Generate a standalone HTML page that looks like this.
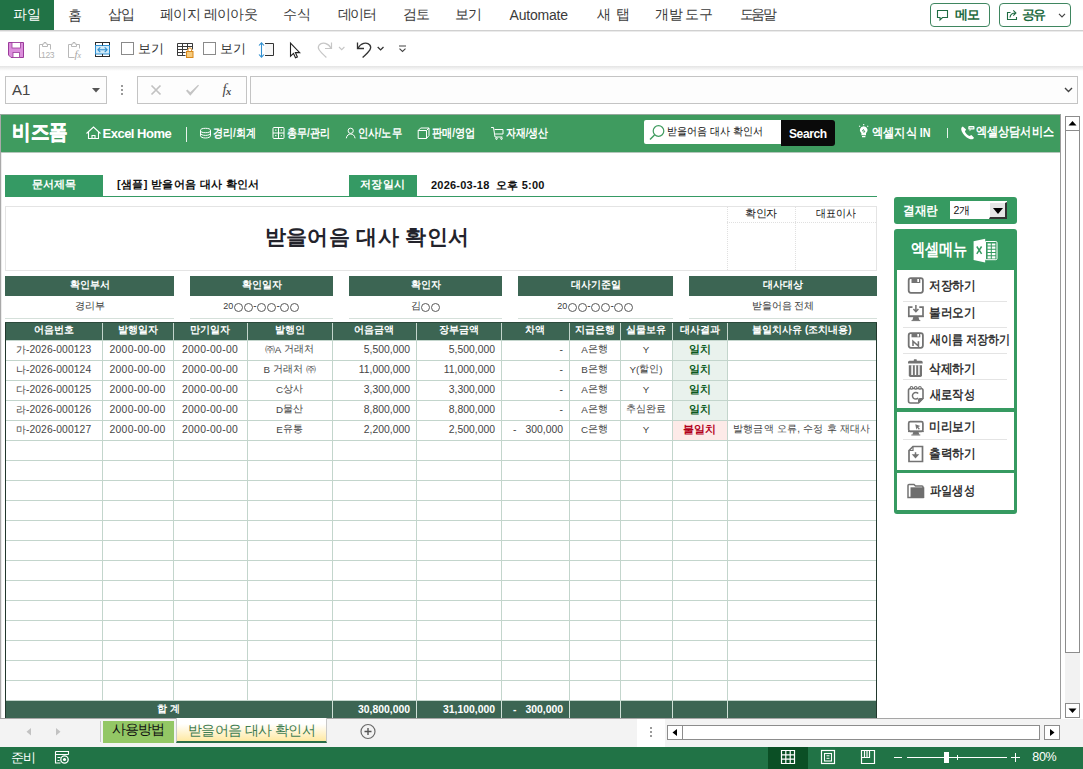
<!DOCTYPE html>
<html lang="ko">
<head>
<meta charset="utf-8">
<title>받을어음 대사 확인서</title>
<style>
*{box-sizing:border-box;margin:0;padding:0}
html,body{width:1083px;height:769px;overflow:hidden;background:#fff}
body{font-family:"Liberation Sans",sans-serif;font-size:12px;color:#222;position:relative}
.a{position:absolute}
.t{position:absolute;white-space:nowrap;line-height:1}
.c{text-align:center}
.r{text-align:right}
.b{font-weight:bold}
svg{position:absolute;overflow:visible}
.btn{border:1px solid #3f8660;border-radius:4px;height:24px;top:3px;background:#fff}
.box{background:#fdfdfd;border:1px solid #c4c4c4}
.dk{background:#3c6553;color:#fff;font-weight:bold;font-size:10px;text-align:center;line-height:18px;position:absolute;white-space:nowrap}
.v{position:absolute;font-size:10px;color:#3a3a3a;text-align:center;white-space:nowrap;line-height:19px}
.cell{position:absolute;font-size:10px;color:#454545;white-space:nowrap;line-height:18px;height:20px}
.l{font-size:9.8px;position:relative;top:0.6px}
.n{font-size:10.4px;line-height:20px}
.d{font-size:10.4px;letter-spacing:0.3px;line-height:20px}
.m{font-size:10.3px;line-height:19.5px;letter-spacing:0.1px}
.hl{position:absolute;height:1px;background:#c3d5cc}
.vl{position:absolute;width:1px;background:#c3d5cc}
.o{display:inline-block;width:9px;height:9px;border:1px solid #5a5a5a;border-radius:50%;margin:0 0.5px;vertical-align:-2.5px}
.ms{position:absolute;left:903px;width:104px;height:1px;background:#e4e4e4}
</style>
</head>
<body>
<div class="a" style="left:0;top:0;width:1083px;height:30px;background:#fff"></div>
<div class="a" style="left:0;top:0;width:54px;height:30px;background:#217346"></div>
<div class="t" style="left:13px;top:7px;font-size:14px;color:#fff;">파일</div>
<div class="t" style="left:67.5px;top:7.5px;font-size:14px;color:#3b3b3b;">홈</div>
<div class="t" style="left:108px;top:7px;font-size:14px;color:#3b3b3b;letter-spacing:-1px;">삽입</div>
<div class="t" style="left:160px;top:7px;font-size:14px;color:#3b3b3b;letter-spacing:-0.57px;">페이지 레이아웃</div>
<div class="t" style="left:282.5px;top:7px;font-size:14px;color:#3b3b3b;">수식</div>
<div class="t" style="left:337.5px;top:7px;font-size:14px;color:#3b3b3b;letter-spacing:-1.25px;">데이터</div>
<div class="t" style="left:402.5px;top:7px;font-size:14px;color:#3b3b3b;letter-spacing:-1px;">검토</div>
<div class="t" style="left:455px;top:7px;font-size:14px;color:#3b3b3b;letter-spacing:-1px;">보기</div>
<div class="t" style="left:509.5px;top:8px;font-size:14px;color:#3b3b3b;letter-spacing:-0.21px;">Automate</div>
<div class="t" style="left:597px;top:7px;font-size:14px;color:#3b3b3b;letter-spacing:0.5px;">새 탭</div>
<div class="t" style="left:655px;top:7px;font-size:14px;color:#3b3b3b;letter-spacing:-0.5px;">개발 도구</div>
<div class="t" style="left:739.5px;top:7px;font-size:14px;color:#3b3b3b;letter-spacing:-2.25px;">도움말</div>
<div class="a btn" style="left:930px;width:60px"></div>
<div class="a btn" style="left:999px;width:72px"></div>
<div class="t" style="left:955.4px;top:7.8px;font-size:13px;color:#1e6b41;font-weight:bold;letter-spacing:-1.4px;">메모</div>
<div class="t" style="left:1022px;top:7.8px;font-size:13px;color:#1e6b41;font-weight:bold;letter-spacing:-1.6px;">공유</div>
<div class="a" style="left:0;top:30px;width:1083px;height:1px;background:#d0d0d0"></div>
<div class="a" style="left:0;top:31px;width:1083px;height:1px;background:#ebebeb"></div>
<div class="a" style="left:0;top:32px;width:1083px;height:34px;background:#fff"></div>
<div class="a" style="left:0;top:66px;width:1083px;height:5px;background:linear-gradient(#e4e4e4,#fff)"></div>
<div class="a" style="left:121px;top:42px;width:13px;height:13px;border:1px solid #8a8a8a;background:#fff"></div>
<div class="a" style="left:203px;top:42px;width:13px;height:13px;border:1px solid #8a8a8a;background:#fff"></div>
<div class="t" style="left:138px;top:42.5px;font-size:12.5px;color:#333;">보기</div>
<div class="t" style="left:220px;top:42.5px;font-size:12.5px;color:#333;">보기</div>
<div class="a" style="left:0;top:71px;width:1083px;height:43px;background:#fff"></div>
<div class="a box" style="left:5px;top:76px;width:102px;height:28px"></div>
<div class="t" style="left:12px;top:82px;font-size:15px;color:#444;">A1</div>
<div class="a" style="left:121px;top:85px;width:2px;height:2px;background:#9a9a9a;box-shadow:0 4px 0 #9a9a9a,0 8px 0 #9a9a9a"></div>
<div class="a box" style="left:137px;top:76px;width:110px;height:28px"></div>
<div class="t" style="left:222.500px;top:82px;font-family:'Liberation Serif',serif;font-style:italic;font-size:14.500px;color:#4a4a4a">f<b style="font-size:10.500px;position:relative;left:-0.500px;top:0.500px">x</b></div>
<div class="a box" style="left:250px;top:76px;width:828px;height:28px"></div>
<div class="a" style="left:0;top:114px;width:1061px;height:604px;background:#fff"></div>
<div class="a" style="left:0;top:114px;width:1px;height:605px;background:#a9a9a9"></div>
<div class="a" style="left:1px;top:153px;width:1px;height:565px;background:#ececec"></div>
<div class="a" style="left:1060px;top:114px;width:1px;height:604px;background:#9b9b9b"></div>
<div class="a" style="left:0;top:114px;width:1061px;height:1px;background:#96a89d"></div>
<div class="a" style="left:1px;top:115px;width:1059px;height:37px;background:#3f9b5f"></div>
<div class="a" style="left:1px;top:152px;width:1059px;height:1px;background:#b4c6bb"></div>
<div class="t" style="left:11.61px;top:121px;font-size:21px;color:#fff;font-weight:bold;-webkit-text-stroke:0.5px #fff;transform:scaleX(0.8852);transform-origin:0 0;">비즈폼</div>
<div class="t" style="left:102.5px;top:126.5px;font-size:13px;color:#fff;font-weight:bold;letter-spacing:-0.5px;">Excel Home</div>
<div class="a" style="left:186px;top:127px;width:1px;height:15px;background:#e8f3ec"></div>
<div class="t" style="left:213.16px;top:127px;font-size:12px;color:#fff;font-weight:bold;transform:scaleX(0.8367);transform-origin:0 0;">경리/회계</div>
<div class="t" style="left:287.16px;top:127px;font-size:12px;color:#fff;font-weight:bold;transform:scaleX(0.8367);transform-origin:0 0;">총무/관리</div>
<div class="t" style="left:357.64px;top:127px;font-size:12px;color:#fff;font-weight:bold;transform:scaleX(0.8571);transform-origin:0 0;">인사/노무</div>
<div class="t" style="left:432.15px;top:127px;font-size:12px;color:#fff;font-weight:bold;transform:scaleX(0.8469);transform-origin:0 0;">판매/영업</div>
<div class="t" style="left:506.18px;top:127px;font-size:12px;color:#fff;font-weight:bold;transform:scaleX(0.82);transform-origin:0 0;">자재/생산</div>
<div class="a" style="left:644px;top:120px;width:138px;height:24px;background:#fff;border-radius:2px 0 0 2px"></div>
<div class="a" style="left:781px;top:120px;width:54px;height:26px;background:#0a0a0a;border-radius:0 3px 3px 0"></div>
<div class="t" style="left:667.09px;top:126.3px;font-size:11px;color:#111;transform:scaleX(0.9118);transform-origin:0 0;">받을어음 대사 확인서</div>
<div class="t" style="left:789px;top:127.5px;font-size:12px;color:#fff;font-weight:bold;letter-spacing:-0.4px;">Search</div>
<div class="t" style="left:871.54px;top:126.5px;font-size:12.5px;color:#fff;font-weight:bold;transform:scaleX(0.8621);transform-origin:0 0;">엑셀지식 IN</div>
<div class="a" style="left:947px;top:128px;width:1px;height:10px;background:#e8f3ec"></div>
<div class="t" style="left:976.15px;top:125px;font-size:13px;color:#fff;font-weight:bold;transform:scaleX(0.8539);transform-origin:0 0;">엑셀상담서비스</div>
<div class="a" style="left:5px;top:175px;width:98px;height:22px;background:#359a64"></div>
<div class="t" style="left:32px;top:179px;font-size:11px;color:#fff;font-weight:bold;">문서제목</div>
<div class="t" style="left:117px;top:178.8px;font-size:11px;color:#111;font-weight:bold;letter-spacing:0.33px;">[샘플] 받을어음 대사 확인서</div>
<div class="a" style="left:349px;top:175px;width:68px;height:22px;background:#359a64"></div>
<div class="t" style="left:360px;top:179px;font-size:11px;color:#fff;font-weight:bold;letter-spacing:0.33px;">저장일시</div>
<div class="t" style="left:431px;top:179.8px;font-size:11px;color:#111;font-weight:bold;letter-spacing:0.22px;">2026-03-18&nbsp; 오후 5:00</div>
<div class="a" style="left:5px;top:196px;width:872px;height:1px;background:#359a64"></div>
<div class="a" style="left:5px;top:206px;width:872px;height:65px;border:1px solid #e4e4e4"></div>
<div class="t" style="left:264.5px;top:226.3px;font-size:21px;color:#23232b;font-weight:bold;letter-spacing:0.4px;">받을어음 대사 확인서</div>
<div class="a" style="left:727px;top:207px;width:0;height:63px;border-left:1px dotted #e0e0e0"></div>
<div class="a" style="left:795px;top:207px;width:0;height:63px;border-left:1px dotted #e0e0e0"></div>
<div class="a" style="left:727px;top:222px;width:149px;height:0;border-top:1px dotted #e0e0e0"></div>
<div class="t" style="left:745px;top:207.5px;font-size:10.5px;color:#111;letter-spacing:-0.5px;">확인자</div>
<div class="t" style="left:816px;top:207.5px;font-size:10.5px;color:#111;transform:scaleX(0.9091);transform-origin:0 0;">대표이사</div>
<div class="dk" style="left:5px;top:276px;width:169px;height:20px">확인부서</div>
<div class="v" style="left:5px;top:296px;width:169px">경리부</div>
<div class="a" style="left:5px;top:318px;width:169px;height:1px;background:#d5e0da"></div>
<div class="dk" style="left:190px;top:276px;width:143px;height:20px">확인일자</div>
<div class="v" style="left:190px;top:296px;width:143px"><span style="font-size:9px">20</span><i class="o"></i><i class="o"></i>-<i class="o"></i><i class="o"></i>-<i class="o"></i><i class="o"></i></div>
<div class="a" style="left:190px;top:318px;width:143px;height:1px;background:#d5e0da"></div>
<div class="dk" style="left:349px;top:276px;width:153px;height:20px">확인자</div>
<div class="v" style="left:349px;top:296px;width:153px">김<i class="o"></i><i class="o"></i></div>
<div class="a" style="left:349px;top:318px;width:153px;height:1px;background:#d5e0da"></div>
<div class="dk" style="left:518px;top:276px;width:155px;height:20px">대사기준일</div>
<div class="v" style="left:518px;top:296px;width:155px"><span style="font-size:9px">20</span><i class="o"></i><i class="o"></i>-<i class="o"></i><i class="o"></i>-<i class="o"></i><i class="o"></i></div>
<div class="a" style="left:518px;top:318px;width:155px;height:1px;background:#d5e0da"></div>
<div class="dk" style="left:689px;top:276px;width:188px;height:20px">대사대상</div>
<div class="v" style="left:689px;top:296px;width:188px">받을어음 전체</div>
<div class="a" style="left:689px;top:318px;width:188px;height:1px;background:#d5e0da"></div>
<div class="a" style="left:5px;top:322px;width:872px;height:18px;background:#3c6553"></div>
<div class="dk" style="left:5px;top:322px;width:97px;height:18px;line-height:16px;background:none">어음번호</div>
<div class="dk" style="left:102px;top:322px;width:71px;height:18px;line-height:16px;background:none">발행일자</div>
<div class="dk" style="left:173px;top:322px;width:74px;height:18px;line-height:16px;background:none">만기일자</div>
<div class="dk" style="left:247px;top:322px;width:85px;height:18px;line-height:16px;background:none">발행인</div>
<div class="dk" style="left:332px;top:322px;width:84px;height:18px;line-height:16px;background:none">어음금액</div>
<div class="dk" style="left:416px;top:322px;width:85px;height:18px;line-height:16px;background:none">장부금액</div>
<div class="dk" style="left:501px;top:322px;width:68px;height:18px;line-height:16px;background:none">차액</div>
<div class="dk" style="left:569px;top:322px;width:51px;height:18px;line-height:16px;background:none">지급은행</div>
<div class="dk" style="left:620px;top:322px;width:52px;height:18px;line-height:16px;background:none">실물보유</div>
<div class="dk" style="left:672px;top:322px;width:55px;height:18px;line-height:16px;background:none">대사결과</div>
<div class="dk" style="left:727px;top:322px;width:150px;height:18px;line-height:16px;background:none">불일치사유 (조치내용)</div>
<div class="a" style="left:673px;top:341px;width:54px;height:19px;background:#e9f2ed"></div>
<div class="a" style="left:673px;top:361px;width:54px;height:19px;background:#e9f2ed"></div>
<div class="a" style="left:673px;top:381px;width:54px;height:19px;background:#e9f2ed"></div>
<div class="a" style="left:673px;top:401px;width:54px;height:19px;background:#e9f2ed"></div>
<div class="a" style="left:673px;top:421px;width:54px;height:19px;background:#fdeae8"></div>
<div class="hl" style="left:5px;top:340px;width:872px"></div>
<div class="hl" style="left:5px;top:360px;width:872px"></div>
<div class="hl" style="left:5px;top:380px;width:872px"></div>
<div class="hl" style="left:5px;top:400px;width:872px"></div>
<div class="hl" style="left:5px;top:420px;width:872px"></div>
<div class="hl" style="left:5px;top:440px;width:872px"></div>
<div class="hl" style="left:5px;top:460px;width:872px"></div>
<div class="hl" style="left:5px;top:480px;width:872px"></div>
<div class="hl" style="left:5px;top:500px;width:872px"></div>
<div class="hl" style="left:5px;top:520px;width:872px"></div>
<div class="hl" style="left:5px;top:540px;width:872px"></div>
<div class="hl" style="left:5px;top:560px;width:872px"></div>
<div class="hl" style="left:5px;top:580px;width:872px"></div>
<div class="hl" style="left:5px;top:600px;width:872px"></div>
<div class="hl" style="left:5px;top:620px;width:872px"></div>
<div class="hl" style="left:5px;top:640px;width:872px"></div>
<div class="hl" style="left:5px;top:660px;width:872px"></div>
<div class="hl" style="left:5px;top:680px;width:872px"></div>
<div class="hl" style="left:5px;top:700px;width:872px"></div>
<div class="vl" style="left:102px;top:322px;height:396px"></div>
<div class="vl" style="left:173px;top:322px;height:396px"></div>
<div class="vl" style="left:247px;top:322px;height:396px"></div>
<div class="vl" style="left:332px;top:322px;height:396px"></div>
<div class="vl" style="left:416px;top:322px;height:396px"></div>
<div class="vl" style="left:501px;top:322px;height:396px"></div>
<div class="vl" style="left:569px;top:322px;height:396px"></div>
<div class="vl" style="left:620px;top:322px;height:396px"></div>
<div class="vl" style="left:672px;top:322px;height:396px"></div>
<div class="vl" style="left:727px;top:322px;height:396px"></div>
<div class="a" style="left:5px;top:700px;width:872px;height:18px;background:#3c6553"></div>
<div class="vl" style="left:332px;top:700px;height:18px;background:#cfe0d7"></div>
<div class="vl" style="left:416px;top:700px;height:18px;background:#cfe0d7"></div>
<div class="vl" style="left:501px;top:700px;height:18px;background:#cfe0d7"></div>
<div class="vl" style="left:569px;top:700px;height:18px;background:#cfe0d7"></div>
<div class="vl" style="left:620px;top:700px;height:18px;background:#cfe0d7"></div>
<div class="vl" style="left:672px;top:700px;height:18px;background:#cfe0d7"></div>
<div class="vl" style="left:727px;top:700px;height:18px;background:#cfe0d7"></div>
<div class="hl" style="left:5px;top:700px;width:872px"></div>
<div class="a" style="left:5px;top:322px;width:1px;height:396px;background:#22382d"></div>
<div class="a" style="left:876px;top:322px;width:1px;height:396px;background:#22382d"></div>
<div class="a" style="left:5px;top:322px;width:872px;height:1px;background:#2c4a3c"></div>
<div class="cell c m" style="left:5px;top:340px;width:97px">가-2026-000123</div>
<div class="cell c d" style="left:102px;top:340px;width:71px">2000-00-00</div>
<div class="cell c d" style="left:173px;top:340px;width:74px">2000-00-00</div>
<div class="cell c" style="left:247px;top:340px;width:85px">㈜<span class="l">A</span> 거래처</div>
<div class="cell r n" style="left:332px;top:340px;width:84px;padding-right:6px">5,500,000</div>
<div class="cell r n" style="left:416px;top:340px;width:85px;padding-right:6px">5,500,000</div>
<div class="cell r n" style="left:501px;top:340px;width:68px;padding-right:6px">-</div>
<div class="cell c" style="left:569px;top:340px;width:51px"><span class="l">A</span>은행</div>
<div class="cell c" style="left:620px;top:340px;width:52px"><span class="l">Y</span></div>
<div class="cell c b" style="left:672px;top:340px;width:55px;color:#0c5a1c;font-size:10.500px">일치</div>
<div class="cell c m" style="left:5px;top:360px;width:97px">나-2026-000124</div>
<div class="cell c d" style="left:102px;top:360px;width:71px">2000-00-00</div>
<div class="cell c d" style="left:173px;top:360px;width:74px">2000-00-00</div>
<div class="cell c" style="left:247px;top:360px;width:85px"><span class="l">B</span> 거래처 ㈜</div>
<div class="cell r n" style="left:332px;top:360px;width:84px;padding-right:6px">11,000,000</div>
<div class="cell r n" style="left:416px;top:360px;width:85px;padding-right:6px">11,000,000</div>
<div class="cell r n" style="left:501px;top:360px;width:68px;padding-right:6px">-</div>
<div class="cell c" style="left:569px;top:360px;width:51px"><span class="l">B</span>은행</div>
<div class="cell c" style="left:620px;top:360px;width:52px"><span class="l">Y(</span>할인<span class="l">)</span></div>
<div class="cell c b" style="left:672px;top:360px;width:55px;color:#0c5a1c;font-size:10.500px">일치</div>
<div class="cell c m" style="left:5px;top:380px;width:97px">다-2026-000125</div>
<div class="cell c d" style="left:102px;top:380px;width:71px">2000-00-00</div>
<div class="cell c d" style="left:173px;top:380px;width:74px">2000-00-00</div>
<div class="cell c" style="left:247px;top:380px;width:85px"><span class="l">C</span>상사</div>
<div class="cell r n" style="left:332px;top:380px;width:84px;padding-right:6px">3,300,000</div>
<div class="cell r n" style="left:416px;top:380px;width:85px;padding-right:6px">3,300,000</div>
<div class="cell r n" style="left:501px;top:380px;width:68px;padding-right:6px">-</div>
<div class="cell c" style="left:569px;top:380px;width:51px"><span class="l">A</span>은행</div>
<div class="cell c" style="left:620px;top:380px;width:52px"><span class="l">Y</span></div>
<div class="cell c b" style="left:672px;top:380px;width:55px;color:#0c5a1c;font-size:10.500px">일치</div>
<div class="cell c m" style="left:5px;top:400px;width:97px">라-2026-000126</div>
<div class="cell c d" style="left:102px;top:400px;width:71px">2000-00-00</div>
<div class="cell c d" style="left:173px;top:400px;width:74px">2000-00-00</div>
<div class="cell c" style="left:247px;top:400px;width:85px"><span class="l">D</span>물산</div>
<div class="cell r n" style="left:332px;top:400px;width:84px;padding-right:6px">8,800,000</div>
<div class="cell r n" style="left:416px;top:400px;width:85px;padding-right:6px">8,800,000</div>
<div class="cell r n" style="left:501px;top:400px;width:68px;padding-right:6px">-</div>
<div class="cell c" style="left:569px;top:400px;width:51px"><span class="l">A</span>은행</div>
<div class="cell c" style="left:620px;top:400px;width:52px">추심완료</div>
<div class="cell c b" style="left:672px;top:400px;width:55px;color:#0c5a1c;font-size:10.500px">일치</div>
<div class="cell c m" style="left:5px;top:420px;width:97px">마-2026-000127</div>
<div class="cell c d" style="left:102px;top:420px;width:71px">2000-00-00</div>
<div class="cell c d" style="left:173px;top:420px;width:74px">2000-00-00</div>
<div class="cell c" style="left:247px;top:420px;width:85px"><span class="l">E</span>유통</div>
<div class="cell r n" style="left:332px;top:420px;width:84px;padding-right:6px">2,200,000</div>
<div class="cell r n" style="left:416px;top:420px;width:85px;padding-right:6px">2,500,000</div>
<div class="cell n" style="left:513px;top:420px">-</div>
<div class="cell r n" style="left:501px;top:420px;width:68px;padding-right:6px">300,000</div>
<div class="cell c" style="left:569px;top:420px;width:51px"><span class="l">C</span>은행</div>
<div class="cell c" style="left:620px;top:420px;width:52px"><span class="l">Y</span></div>
<div class="cell c b" style="left:672px;top:420px;width:55px;color:#b3001b;font-size:10.500px">불일치</div>
<div class="cell" style="left:733px;top:420px;letter-spacing:0.2px">발행금액 오류, 수정 후 재대사</div>
<div class="cell c b" style="left:5px;top:700px;width:327px;color:#fff">합 계</div>
<div class="cell r b n" style="left:332px;top:700px;width:84px;padding-right:6px;color:#fff">30,800,000</div>
<div class="cell r b n" style="left:416px;top:700px;width:85px;padding-right:6px;color:#fff">31,100,000</div>
<div class="cell b n" style="left:513px;top:700px;color:#fff">-</div>
<div class="cell r b n" style="left:501px;top:700px;width:68px;padding-right:6px;color:#fff">300,000</div>
<div class="a" style="left:894px;top:197px;width:123px;height:27px;background:#369a61;border-radius:3px"></div>
<div class="t" style="left:903.11px;top:203.5px;font-size:13px;color:#fff;font-weight:bold;transform:scaleX(0.8947);transform-origin:0 0;">결재란</div>
<div class="a" style="left:950px;top:201px;width:57px;height:18px;background:#fff"></div>
<div class="t" style="left:953.5px;top:204.7px;font-size:10.5px;color:#111;letter-spacing:-0.5px;">2개</div>
<div class="a" style="left:989px;top:202px;width:18px;height:17px;background:#e6e6e6;border-right:2px solid #333;border-bottom:2px solid #333;border-top:1px solid #fff;border-left:1px solid #fff"></div>
<div class="a" style="left:894px;top:229px;width:123px;height:285px;background:#369a61;border-radius:3px"></div>
<div class="t" style="left:911.17px;top:241px;font-size:17px;color:#fff;font-weight:bold;transform:scaleX(0.8333);transform-origin:0 0;">엑셀메뉴</div>
<div class="a" style="left:897px;top:270px;width:117px;height:138px;background:#fff"></div>
<div class="a" style="left:897px;top:411.500px;width:117px;height:58.500px;background:#fff"></div>
<div class="a" style="left:897px;top:473.300px;width:117px;height:36.400px;background:#fff"></div>
<div class="t" style="left:929.1px;top:279px;font-size:13px;color:#333;font-weight:bold;transform:scaleX(0.898);transform-origin:0 0;">저장하기</div>
<div class="t" style="left:929.1px;top:306px;font-size:13px;color:#333;font-weight:bold;transform:scaleX(0.898);transform-origin:0 0;">불러오기</div>
<div class="t" style="left:930px;top:333px;font-size:13px;color:#333;font-weight:bold;transform:scaleX(0.8495);transform-origin:0 0;">새이름 저장하기</div>
<div class="t" style="left:929.1px;top:362px;font-size:13px;color:#333;font-weight:bold;transform:scaleX(0.898);transform-origin:0 0;">삭제하기</div>
<div class="t" style="left:930px;top:388px;font-size:13px;color:#333;font-weight:bold;transform:scaleX(0.8627);transform-origin:0 0;">새로작성</div>
<div class="t" style="left:929.1px;top:420px;font-size:13px;color:#333;font-weight:bold;transform:scaleX(0.898);transform-origin:0 0;">미리보기</div>
<div class="t" style="left:929.1px;top:447px;font-size:13px;color:#333;font-weight:bold;transform:scaleX(0.898);transform-origin:0 0;">출력하기</div>
<div class="t" style="left:930px;top:484px;font-size:13px;color:#333;font-weight:bold;transform:scaleX(0.8627);transform-origin:0 0;">파일생성</div>
<div class="ms" style="top:301px"></div>
<div class="ms" style="top:327px"></div>
<div class="ms" style="top:353px"></div>
<div class="ms" style="top:379px"></div>
<div class="ms" style="top:439px"></div>
<div class="a" style="left:1061px;top:114px;width:22px;height:605px;background:#fff"></div>
<div class="a" style="left:1065px;top:131px;width:15px;height:572px;background:#f2f2f2"></div>
<div class="a" style="left:1065px;top:130px;width:15px;height:523px;background:#fff;border:1px solid #8c8c8c"></div>
<div class="a" style="left:1065px;top:116px;width:15px;height:15px;background:#fff;border:1px solid #8c8c8c"></div>
<div class="a" style="left:1065px;top:703px;width:15px;height:15px;background:#fff;border:1px solid #8c8c8c"></div>
<div class="a" style="left:0;top:718px;width:1061px;height:1px;background:#a6a6a6"></div>
<div class="a" style="left:0;top:719px;width:1083px;height:28px;background:#f3f3f3"></div>
<div class="a" style="left:637px;top:719px;width:28px;height:28px;background:#fff"></div>
<div class="a" style="left:100px;top:721px;width:1px;height:21px;background:#c8c8c8"></div>
<div class="a" style="left:103px;top:721px;width:71px;height:22px;background:#93c765"></div>
<div class="t" style="left:111.7px;top:723.4px;font-size:13.5px;color:#111;letter-spacing:-0.77px;">사용방법</div>
<div class="a" style="left:176px;top:718px;width:151px;height:25px;background:linear-gradient(#ffffff 25%,#ffe9a2);border-left:1px solid #c8c8c8;border-right:1px solid #c8c8c8;border-bottom:2px solid #2a6d47"></div>
<div class="t" style="left:188px;top:723.5px;font-size:13.5px;color:#3f7d52;letter-spacing:-0.6px;">받을어음 대사 확인서</div>
<div class="a" style="left:650px;top:727px;width:2px;height:2px;background:#9a9a9a;box-shadow:0 4px 0 #9a9a9a,0 8px 0 #9a9a9a"></div>
<div class="a" style="left:667px;top:725px;width:16px;height:15px;background:#fff;border:1px solid #8c8c8c"></div>
<div class="a" style="left:682px;top:725px;width:358px;height:15px;background:#fff;border:1px solid #8c8c8c"></div>
<div class="a" style="left:1044px;top:725px;width:16px;height:15px;background:#fff;border:1px solid #8c8c8c"></div>
<div class="a" style="left:0;top:747px;width:1083px;height:22px;background:#217346"></div>
<div class="t" style="left:10.5px;top:751.5px;font-size:12.5px;color:#fff;letter-spacing:-0.5px;">준비</div>
<div class="a" style="left:768px;top:747px;width:40px;height:22px;background:#0b4f25"></div>
<div class="a" style="left:894px;top:757px;width:8px;height:1px;background:#fff"></div>
<div class="a" style="left:907px;top:757px;width:100px;height:1px;background:#fff"></div>
<div class="a" style="left:944px;top:752px;width:5px;height:11px;background:#fff"></div>
<div class="a" style="left:957px;top:755px;width:1px;height:5px;background:#fff"></div>
<div class="a" style="left:1011px;top:757px;width:9px;height:1px;background:#fff"></div>
<div class="a" style="left:1015px;top:753px;width:1px;height:9px;background:#fff"></div>
<div class="t" style="left:1032.3px;top:751.1px;font-size:12.5px;color:#fff;letter-spacing:-0.35px;">80%</div>
<svg style="left:0;top:0" width="1083" height="769" viewBox="0 0 1083 769" fill="none">
<!-- ribbon: comment, share, chevron -->
<path d="M937.5 10.5h10v7h-5l-2.500 2.500v-2.500h-2.500z" stroke="#1e6b41" stroke-width="1.1"/>
<path d="M1010.500 12.500h-3v7h9v-2.500" stroke="#1e6b41" stroke-width="1.1"/>
<path d="M1010 17.500c0.300-3 2-4.500 5.500-4.500m-2.200-2.600l2.600 2.600-2.600 2.600" stroke="#1e6b41" stroke-width="1.1"/>
<path d="M1059 13.800l3 3 3-3" stroke="#444" stroke-width="1.2"/>
<!-- QAT: save -->
<path d="M8.500 42.500h15v15h-12.500l-2.500-2.500z" fill="#dc8fdc" stroke="#9b3b9b"/>
<rect x="12" y="42.500" width="8.500" height="5.500" fill="#fff" stroke="#9b3b9b" stroke-width="0.800"/>
<rect x="13" y="52.500" width="6.500" height="5" fill="#fff" stroke="#9b3b9b" stroke-width="0.800"/>
<!-- QAT: paste values (disabled) -->
<path d="M42.500 44.500h-3v13h2M47.500 44.500h3v5" stroke="#b8b8b8"/>
<path d="M42.500 46.500v-2.500h1.500v-1.500h2v1.500h1.500v2.500z" stroke="#b8b8b8"/>
<text x="41" y="58" font-family="Liberation Sans, sans-serif" font-size="8.500" fill="#b0b0b0" letter-spacing="-0.300">123</text>
<!-- QAT: paste formula (disabled) -->
<path d="M71.500 44.500h-3v13h6M76.500 44.500h3v4" stroke="#b8b8b8"/>
<path d="M71.500 46.500v-2.500h1.500v-1.500h2v1.500h1.500v2.500z" stroke="#b8b8b8"/>
<text x="74.500" y="57.500" font-family="Liberation Serif, serif" font-style="italic" font-size="11" fill="#a8a8a8">f<tspan font-size="8">x</tspan></text>
<!-- QAT: fit column -->
<rect x="95.500" y="42.500" width="14" height="14" stroke="#2b2b2b"/>
<rect x="95.500" y="45.500" width="14" height="8.500" fill="#d3ebf8" stroke="#2f8fd0"/>
<path d="M102.500 42.500v3M102.500 54v2.500" stroke="#2b2b2b"/>
<path d="M98 49.700h9M100.300 47.300l-2.400 2.400 2.400 2.400M104.700 47.300l2.400 2.400-2.400 2.400" stroke="#2f8fd0" stroke-width="1.100"/>
<!-- QAT: protect sheet -->
<path d="M177.500 43.500h15v6M177.500 43.500v12h8M177.500 46.500h15M177.500 49.500h10M177.500 52.500h8M182.500 43.500v12M187.500 43.500v6M192.500 43.500v5" stroke="#3a3a3a"/>
<rect x="186.500" y="51.500" width="6.500" height="6" fill="#f7cb7c" stroke="#d8871b"/>
<path d="M188 51.500v-1.800a1.800 1.800 0 0 1 3.600 0v1.800" stroke="#d8871b"/>
<!-- QAT: row height -->
<path d="M261.500 43v14M259 45.500l2.500-2.700 2.500 2.700M259 54.500l2.500 2.700 2.500-2.700" stroke="#2f8fd0" stroke-width="1.100"/>
<path d="M265 43.500h8.500v12h-8.500" fill="#f7f7f7" stroke="#333"/>
<!-- QAT: cursor -->
<path d="M290.500 43v13.200l3-2.800 2 4.400 1.900-0.900-2-4.300h4.300z" fill="#fff" stroke="#222" stroke-width="1.100"/>
<!-- QAT: redo (disabled) -->
<path d="M331.500 42.500v6h-6.500" stroke="#c6c6c6" stroke-width="1.200"/>
<path d="M331 48.300c-2.500-5.200-8.800-6.800-11.800-3.300-2.400 3-0.300 5.600 7.200 12.500" stroke="#c6c6c6" stroke-width="1.200"/>
<path d="M339 47l2.700 2.700 2.700-2.700" stroke="#c6c6c6" stroke-width="1.100"/>
<!-- QAT: undo -->
<path d="M357.500 42.500v6h6.500" stroke="#333" stroke-width="1.300"/>
<path d="M358 48.300c2.500-5.200 8.800-6.800 11.800-3.300 2.400 3 0.300 5.600-7.200 12.500" stroke="#333" stroke-width="1.300"/>
<path d="M377.700 47l2.900 2.900 2.900-2.900" stroke="#333" stroke-width="1.300"/>
<path d="M399 46h7M399.500 48.700l3 2.800 3-2.800" stroke="#444" stroke-width="1.100"/>
<!-- formula bar -->
<path d="M92 88h8l-4 4.500z" fill="#555"/>
<path d="M151.500 85.500l9 9m0-9l-9 9" stroke="#c2c2c2" stroke-width="1.700"/>
<path d="M186 90.800l1.400-1.400 2.900 2.900 7.800-7.600 0.900 0.700-8.700 10.400z" fill="#c4c4c4"/>
<path d="M1065 88l3.500 3.500 3.500-3.500" stroke="#444" stroke-width="1.400"/>
<!-- biz: home -->
<path d="M86.500 133.500l7-6.500 7 6.500M88.500 132v6.500h10v-6.500M92 138.500v-3h3v3" stroke="#fff" stroke-width="1.100"/>
<!-- biz: db -->
<ellipse cx="205.500" cy="130.500" rx="5" ry="2.200" stroke="#fff"/>
<path d="M200.500 130.500v5.300c0 1.200 2.200 2.200 5 2.200s5-1 5-2.200v-5.300M200.500 133.200c0 1.200 2.200 2.200 5 2.200s5-1 5-2.200" stroke="#fff"/>
<!-- biz: grid -->
<rect x="273" y="127.500" width="11" height="11" rx="1" stroke="#fff"/>
<path d="M278.500 127.500v11M273 133h11" stroke="#fff"/>
<path d="M275.200 130.200h1.200M280.700 130.200h1.200M275.200 135.700h1.200M280.700 135.700h1.200" stroke="#fff" stroke-width="1.200"/>
<!-- biz: person -->
<circle cx="350.700" cy="130.800" r="2.600" stroke="#fff"/>
<path d="M346.300 138.300c0.500-3 2.300-4.300 4.400-4.300s3.900 1.300 4.400 4.300" stroke="#fff"/>
<!-- biz: box -->
<path d="M418.200 130.500l2.500-2.500h8.300v7.500l-2.500 3h-8.300zM418.200 130.500h8.300v8M426.500 130.500l2.500-2.500" stroke="#fff"/>
<!-- biz: cart -->
<path d="M491.500 127.500h2l1.500 9.500h7M495 129.500h8v4.500h-7.500M496.500 139v0.100M501.500 139v0.100" stroke="#fff" stroke-linecap="round"/>
<circle cx="496.500" cy="138.500" r="0.900" stroke="#fff" stroke-width="0.800"/>
<circle cx="501.500" cy="138.500" r="0.900" stroke="#fff" stroke-width="0.800"/>
<!-- biz: magnifier -->
<circle cx="658.500" cy="131" r="5.300" stroke="#3f9b5f" stroke-width="1.200"/>
<path d="M654.500 135l-4.500 4.500" stroke="#3f9b5f" stroke-width="1.400"/>
<!-- biz: bulb -->
<path d="M863.700 126.200a3.900 3.900 0 0 1 2.300 7.050v1.900h-4.600v-1.900a3.900 3.900 0 0 1 2.300-7.050z" fill="#fff"/>
<path d="M862 136.600h3.400M863.700 124v1.200M859.200 125.800l0.900 0.900M868.200 125.800l-0.900 0.900" stroke="#fff" stroke-width="1.100"/>
<path d="M863.700 129.200l-1.300 1.800h2.600l-1.300 1.800" stroke="#3f9b5f" stroke-width="0.900"/>
<!-- biz: phone -->
<path d="M962.800 126.500c-1.800 0.900-2 2.500-1 4.900 1.500 3.300 4 5.800 7.300 7.300 2.400 1 4 0.800 4.900-1l-2.600-2.800-2 1.200c-2-1-3.500-2.500-4.500-4.500l1.200-2z" fill="#fff"/>
<rect x="968.300" y="126" width="6.200" height="3.600" rx="0.900" fill="#fff"/>
<path d="M969.600 129.400v1.800l1.800-1.800z" fill="#fff"/>
<path d="M969.500 127.800h3.800" stroke="#3f9b5f" stroke-width="0.800"/>
<!-- right panel: dropdown arrow -->
<path d="M993 208h10l-5 6z" fill="#000"/>
<!-- right panel: excel icon -->
<path d="M985.500 241.500h10.300a1.200 1.200 0 0 1 1.200 1.200v15.800a1.200 1.200 0 0 1-1.200 1.200h-10.300z" stroke="#fff" stroke-width="1"/>
<path d="M987.600 243.4h3.200v2.200h-3.200zM991.800 243.4h3.600v2.200h-3.600z" fill="#fff"/><path d="M987.600 246.6h3.200v2.200h-3.200zM991.800 246.6h3.600v2.200h-3.600z" fill="#fff"/><path d="M987.600 249.8h3.200v2.200h-3.200zM991.800 249.8h3.600v2.200h-3.600z" fill="#fff"/><path d="M987.600 253.0h3.200v2.200h-3.200zM991.800 253.0h3.600v2.200h-3.600z" fill="#fff"/><path d="M987.600 256.2h3.200v2.200h-3.200zM991.800 256.2h3.600v2.200h-3.600z" fill="#fff"/>
<path d="M973.600 241.200l11.600-2.500v23.800l-11.600-2.500z" fill="#fff"/>
<path d="M976.800 246.500l4.800 7.300M981.600 246.500l-4.800 7.300" stroke="#369a61" stroke-width="1.500"/>
<!-- menu: save -->
<rect x="908.700" y="278.200" width="14.200" height="14.600" rx="2.200" stroke="#737373" stroke-width="1.800"/>
<path d="M911.500 278h8.800v5h-8.800z" fill="#737373"/>
<path d="M917.300 279h1.700v3h-1.700z" fill="#fff"/>
<!-- menu: load -->
<path d="M912.500 307.200h-3.700v9h14.200v-9h-3.700" stroke="#737373" stroke-width="1.700"/>
<path d="M908 316.200h15.800v1h-15.800z" fill="#737373"/>
<path d="M913.300 317h5.200l0.900 3.200h-7z" fill="#737373"/>
<path d="M911.500 320.600h8.800" stroke="#737373" stroke-width="1"/>
<path d="M915.900 305v6M913.400 309l2.500 2.700 2.500-2.700" stroke="#737373" stroke-width="1.500"/>
<!-- menu: save as -->
<rect x="908.700" y="333.200" width="14.200" height="14.600" rx="2.200" stroke="#737373" stroke-width="1.800"/>
<path d="M911.500 333h8.800v4.300h-8.800z" fill="#737373"/>
<path d="M917.300 334h1.700v2.400h-1.700z" fill="#fff"/>
<path d="M913 346v-4.800l5.400 4.800v-4.800" stroke="#737373" stroke-width="1.600"/>
<!-- menu: delete -->
<path d="M908 363.500v-1.300a1.500 1.500 0 0 1 1.500-1.500h11.700a1.500 1.500 0 0 1 1.500 1.500v1.300z" fill="#737373"/>
<rect x="913.800" y="359.300" width="3" height="2" rx="0.600" fill="#737373"/>
<path d="M908.800 365.300h13.200v10a1.700 1.700 0 0 1-1.700 1.700h-9.800a1.700 1.700 0 0 1-1.700-1.700z" fill="#737373"/>
<path d="M911.300 365.300h1.600v9.700h-1.600zM914.800 365.300h1.400v9.700h-1.400zM918.200 365.300h1.500v9.700h-1.500z" fill="#fff"/>
<!-- menu: new -->
<path d="M910.500 388.500h10.500a2 2 0 0 1 2 2v8l-4.500 4.500h-8a2 2 0 0 1-2-2v-10.500a2 2 0 0 1 2-2z" stroke="#737373" stroke-width="1.600"/>
<path d="M918.500 403v-3a1.500 1.500 0 0 1 1.500-1.500h3z" fill="#737373" stroke="#737373" stroke-width="1"/>
<circle cx="911.500" cy="387.800" r="1.300" fill="#fff" stroke="#737373" stroke-width="1.100"/>
<circle cx="915.700" cy="387.800" r="1.300" fill="#fff" stroke="#737373" stroke-width="1.100"/>
<circle cx="919.900" cy="387.800" r="1.300" fill="#fff" stroke="#737373" stroke-width="1.100"/>
<path d="M918.200 393.600a3.300 3.300 0 1 0 0 4.400" stroke="#737373" stroke-width="1.500"/>
<!-- menu: preview -->
<rect x="908.700" y="421.700" width="14.200" height="9.600" rx="1.500" stroke="#737373" stroke-width="1.700"/>
<path d="M908 430.700h15.800v1.400h-15.800z" fill="#737373"/>
<path d="M913.300 432h5.200l0.900 2.800h-7z" fill="#737373"/>
<path d="M911.300 435h9" stroke="#737373" stroke-width="1"/>
<path d="M915.300 424.300l5 1.700-2.100 0.900 1.700 1.900-1 0.900-1.700-1.900-0.900 2z" fill="#737373"/>
<!-- menu: print/export -->
<path d="M913 446.500h9.500v15h-13.500v-11z" stroke="#737373" stroke-width="1.700"/>
<path d="M913 446.500v4h-4" stroke="#737373" stroke-width="1.200"/>
<path d="M915.500 452.300v4M913.400 455l2.100 2.300 2.100-2.300z" stroke="#737373" stroke-width="1.500" fill="#737373"/>
<!-- menu: folder -->
<path d="M908 485.500a1 1 0 0 1 1-1h5l1.500 1.500h6.500a1 1 0 0 1 1 1v10.500h-15z" fill="#fff" stroke="#737373" stroke-width="1.500"/>
<path d="M910.500 487.300h13.800v10.700h-13.800z" fill="#6e6e6e"/>
<!-- v scrollbar arrows -->
<path d="M1068.500 125.500h8l-4-4.500z" fill="#000"/>
<path d="M1068.500 708.500h8l-4 4.500z" fill="#000"/>
<!-- sheet nav -->
<path d="M31 728v7.500l-4.500-3.750z" fill="#c2c2c2"/>
<path d="M56 728v7.500l4.500-3.750z" fill="#c2c2c2"/>
<circle cx="368" cy="731.500" r="7" stroke="#6a6a6a" stroke-width="1.200"/>
<path d="M368 728v7M364.500 731.500h7" stroke="#555" stroke-width="1.400"/>
<path d="M677 729v7l-4.500-3.500z" fill="#000"/>
<path d="M1050 729v7l4.500-3.500z" fill="#000"/>
<!-- status: macro icon -->
<path d="M55.500 751.500h13v3M55.500 751.500v11.500h5M55.500 754.500h13M57.500 757.500h3M57.500 760.500h2" stroke="#fff" stroke-width="1.100"/>
<circle cx="64.500" cy="759.500" r="3.700" stroke="#fff" stroke-width="1.300"/>
<circle cx="64.500" cy="759.500" r="1.600" fill="#fff"/>
<!-- status: normal view -->
<path d="M781.500 750.500h13v13h-13zM785.800 750.500v13M790.200 750.500v13M781.500 754.800h13M781.500 759.200h13" stroke="#fff" stroke-width="1.200"/>
<!-- status: page layout -->
<rect x="821.500" y="750.500" width="13" height="13" stroke="#fff" stroke-width="1.200"/>
<rect x="824.500" y="753.500" width="7" height="7.500" stroke="#fff" stroke-width="1.100"/>
<path d="M826.500 755.800h3M826.500 758.300h3" stroke="#fff"/>
<!-- status: page break -->
<path d="M861.500 750.500h13v13h-13zM861.500 757.500h8v-7M864.500 750.500v6.500M867 750.500v6.500" stroke="#fff" stroke-width="1.200"/>
</svg>
</body>
</html>
